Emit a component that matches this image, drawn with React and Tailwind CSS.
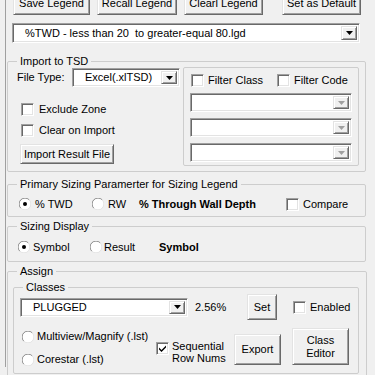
import React from "react";

const raised =
  "border border-t-[#e3e3e3] border-l-[#e3e3e3] border-r-[#696969] border-b-[#696969] shadow-[inset_1px_1px_0_#ffffff,inset_-1px_-1px_0_#a0a0a0] bg-[#f0f0f0]";
const sunken =
  "border border-t-[#a0a0a0] border-l-[#a0a0a0] border-r-white border-b-white shadow-[inset_1px_1px_0_#696969,inset_-1px_-1px_0_#e3e3e3] bg-white";

function Btn({ className = "", children }) {
  return (
    <div className={`${raised} flex shrink-0 items-center justify-center text-center ${className}`}>
      {children}
    </div>
  );
}

function Combo({ className = "", value = "", disabled = false }) {
  return (
    <div className={`${sunken} flex shrink-0 items-stretch p-[2px] ${className}`}>
      <div className="flex flex-1 items-center overflow-hidden whitespace-nowrap pl-[2px]">{value}</div>
      <div className={`${raised} flex w-[16px] items-center justify-center`}>
        <svg width="7" height="4" viewBox="0 0 7 4">
          <path d="M0 0h7L3.5 4z" fill={disabled ? "#a0a0a0" : "#000"} />
        </svg>
      </div>
    </div>
  );
}

function Check({ checked = false, className = "" }) {
  return (
    <div className={`${sunken} flex h-[13px] w-[13px] shrink-0 items-center justify-center ${className}`}>
      {checked && (
        <svg width="7" height="7" viewBox="0 0 7 7">
          <path d="M0 2.5l2.5 2.5L7 0.5v2L2.5 7 0 4.5z" fill="#000" />
        </svg>
      )}
    </div>
  );
}

function Radio({ checked = false, className = "" }) {
  return (
    <svg width="12" height="12" viewBox="0 0 12 12" className={`shrink-0 ${className}`}>
      <circle cx="6" cy="6" r="5.5" fill="#fff" />
      <path d="M10.2 1.8A5.5 5.5 0 0 0 1.8 10.2" fill="none" stroke="#8a8a8a" strokeWidth="1" />
      <path d="M1.8 10.2A5.5 5.5 0 0 0 10.2 1.8" fill="none" stroke="#e3e3e3" strokeWidth="1" />
      {checked && <circle cx="6" cy="6" r="2" fill="#000" />}
    </svg>
  );
}

function Group({ label, className = "", legendClass = "ml-[9px]", children }) {
  return (
    <fieldset className={`m-0 min-w-0 rounded-[2px] border border-[#cdcdcd] p-0 ${className}`}>
      {label && <legend className={`px-[3px] leading-[13px] ${legendClass}`}>{label}</legend>}
      {children}
    </fieldset>
  );
}

export default function App() {
  return (
    <div className="h-[375px] w-[375px] overflow-hidden bg-[#f0f0f0] pl-[5px] font-['Liberation_Sans',Arial,sans-serif] text-[11px] leading-[13px] text-black">
      <div className="h-full border-l border-[#a0a0a0]">
        {/* Legend buttons */}
        <div className="mt-[-8px] flex pl-[7px]">
          <Btn className="h-[23px] w-[77px]">Save Legend</Btn>
          <Btn className="ml-[7px] h-[23px] w-[80px]">Recall Legend</Btn>
          <Btn className="ml-[7px] h-[23px] w-[79px]">Clearl Legend</Btn>
          <Btn className="ml-[19px] h-[23px] w-[79px]">Set as Default</Btn>
        </div>

        <Combo
          className="ml-[6px] mt-[8px] h-[20px] w-[348px]"
          value={<span className="pl-[8px]">%TWD - less than 20&nbsp; to greater-equal 80.lgd</span>}
        />

        {/* Import to TSD */}
        <Group label="Import to TSD" className="ml-[1px] mt-[12px] h-[117px] w-[359px]">
          <div className="flex">
            <div className="w-[175px]">
              <div className="flex h-[19px] items-center">
                <span className="ml-[9px] w-[55px]">File Type:</span>
                <Combo className="h-[19px] w-[108px]" value={<span className="pl-[8px]">Excel(.xlTSD)</span>} />
              </div>
              <div className="mt-[16px] flex items-center">
                <Check className="ml-[13px]" />
                <span className="ml-[5px]">Exclude Zone</span>
              </div>
              <div className="mt-[8px] flex items-center">
                <Check className="ml-[13px]" />
                <span className="ml-[5px]">Clear on Import</span>
              </div>
              <Btn className="ml-[12px] mt-[7px] h-[20px] w-[94px]">Import Result File</Btn>
            </div>

            <div className="mt-[-1px] h-[99px] w-[176px] rounded-[2px] border border-[#cdcdcd]">
              <div className="mt-[6px] flex items-center">
                <Check className="ml-[7px]" />
                <span className="ml-[4px] w-[69px]">Filter Class</span>
                <Check />
                <span className="ml-[4px]">Filter Code</span>
              </div>
              <Combo className="ml-[6px] mt-[6px] h-[19px] w-[162px]" disabled />
              <Combo className="ml-[6px] mt-[6px] h-[19px] w-[162px]" disabled />
              <Combo className="ml-[6px] mt-[6px] h-[19px] w-[162px]" disabled />
            </div>
          </div>
        </Group>

        {/* Primary sizing */}
        <Group
          label="Primary Sizing Paramerter for Sizing Legend"
          className="ml-[1px] mt-[6px] h-[39px] w-[359px]"
        >
          <div className="mt-[6px] flex h-[14px] items-center">
            <Radio checked className="ml-[11px]" />
            <span className="ml-[4px] w-[57px]">% TWD</span>
            <Radio />
            <span className="ml-[4px] w-[31px]">RW</span>
            <span className="w-[147px] font-bold">% Through Wall Depth</span>
            <Check />
            <span className="ml-[4px]">Compare</span>
          </div>
        </Group>

        {/* Sizing display */}
        <Group label="Sizing Display" className="ml-[1px] mt-[3px] h-[42px] w-[359px]">
          <div className="mt-[7px] flex h-[14px] items-center">
            <Radio checked className="ml-[10px]" />
            <span className="ml-[3px] w-[57px]">Symbol</span>
            <Radio />
            <span className="ml-[2px] w-[55px]">Result</span>
            <span className="font-bold">Symbol</span>
          </div>
        </Group>

        {/* Assign */}
        <Group label="Assign" className="ml-[1px] mt-[3px] h-[140px] w-[360px]">
          <Group label="Classes" className="ml-[5px] mt-[3px] h-[93px] w-[346px]">
            <div className="flex h-[26px] items-center">
              <Combo className="ml-[6px] h-[19px] w-[168px]" value={<span className="pl-[8px]">PLUGGED</span>} />
              <span className="ml-[7px] w-[52px]">2.56%</span>
              <Btn className="h-[26px] w-[30px]">Set</Btn>
              <Check className="ml-[16px]" />
              <span className="ml-[4px]">Enabled</span>
            </div>
            <div className="mt-[8px] flex">
              <div className="w-[140px]">
                <div className="mt-[2px] flex items-center">
                  <Radio className="ml-[8px]" />
                  <span className="ml-[3px]">Multiview/Magnify (.lst)</span>
                </div>
                <div className="mt-[10px] flex items-center">
                  <Radio className="ml-[8px]" />
                  <span className="ml-[3px]">Corestar (.lst)</span>
                </div>
              </div>
              <div className="mt-[12px] flex items-start">
                <Check checked className="mt-[2px] ml-[2px]" />
                <span className="ml-[3px] w-[62px] leading-[12px]">
                  Sequential
                  <br />
                  Row Nums
                </span>
              </div>
              <Btn className="mt-[6px] h-[31px] w-[47px]">Export</Btn>
              <Btn className="ml-[11px] h-[37px] w-[57px] leading-[13px]">
                Class
                <br />
                Editor
              </Btn>
            </div>
          </Group>
        </Group>
      </div>
    </div>
  );
}
